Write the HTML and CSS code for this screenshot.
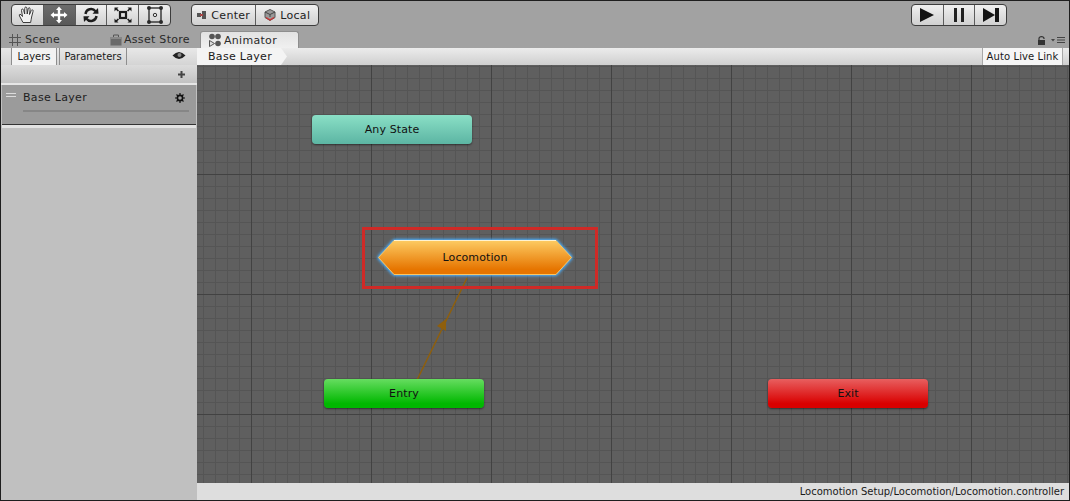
FILE: index.html
```html
<!DOCTYPE html>
<html lang="en">
<head>
  <meta charset="UTF-8" />
  <title>Animator</title>
  <link rel="stylesheet" href="styles.css">
</head>
<body>
  <div class="window">
    <div class="toolbar">
      <div class="btn-group tools">
        <div class="tool-btn">
          <svg width="20" height="18" viewBox="0 0 20 18"><path d="M6 16.5 L2.5 10 Q1.8 8.5 3 8.3 Q4 8.2 5.5 10.5 L4.5 4.5 Q4.4 3 5.4 3 Q6.3 3 6.7 4.5 L7.7 8 L7.7 2.5 Q7.8 1 8.8 1 Q9.8 1 9.9 2.5 L10.2 8 L11.2 2.8 Q11.5 1.6 12.4 1.8 Q13.3 2 13.1 3.4 L12.5 8.5 L14.2 4.5 Q14.8 3.5 15.6 3.9 Q16.4 4.4 16 5.6 L14.6 11 Q14.2 13.5 13.6 16.5 Z" fill="#f2f2f2" stroke="#2a2a2a" stroke-width="0.9"/></svg>
        </div>
        <div class="tool-btn active">
          <svg width="18" height="18" viewBox="0 0 18 18"><path d="M9 0.5 L12 4 L10.2 4 L10.2 7.8 L14 7.8 L14 6 L17.5 9 L14 12 L14 10.2 L10.2 10.2 L10.2 14 L12 14 L9 17.5 L6 14 L7.8 14 L7.8 10.2 L4 10.2 L4 12 L0.5 9 L4 6 L4 7.8 L7.8 7.8 L7.8 4 L6 4 Z" fill="#fff"/></svg>
        </div>
        <div class="tool-btn">
          <svg width="16" height="16" viewBox="0 0 16 16"><path d="M2.5 7 A5.6 5.6 0 0 1 12.5 4.2" fill="none" stroke="#1c1c1c" stroke-width="2.4"/><path d="M9.5 6.8 L15.5 6.8 L15 1 Z" fill="#1c1c1c"/><path d="M13.5 9 A5.6 5.6 0 0 1 3.5 11.8" fill="none" stroke="#1c1c1c" stroke-width="2.4"/><path d="M6.5 9.2 L0.5 9.2 L1 15 Z" fill="#1c1c1c"/></svg>
        </div>
        <div class="tool-btn">
          <svg width="18" height="16" viewBox="0 0 18 16"><rect x="6" y="5" width="6" height="6" fill="none" stroke="#1c1c1c" stroke-width="2.2"/><path d="M0.5 0.5 H4.5 L3.2 1.8 L5 3.6 L3.8 4.6 L2 2.8 L0.5 4.5 Z M17.5 0.5 H13.5 L14.8 1.8 L13 3.6 L14.2 4.6 L16 2.8 L17.5 4.5 Z M0.5 15.5 H4.5 L3.2 14.2 L5 12.4 L3.8 11.4 L2 13.2 L0.5 11.5 Z M17.5 15.5 H13.5 L14.8 14.2 L13 12.4 L14.2 11.4 L16 13.2 L17.5 11.5 Z" fill="#1c1c1c"/></svg>
        </div>
        <div class="tool-btn">
          <svg width="18" height="18" viewBox="0 0 18 18"><rect x="3" y="2" width="12" height="14" fill="none" stroke="#222" stroke-width="1.3"/><circle cx="3" cy="2" r="2" fill="#2a2a2a"/><circle cx="15" cy="2" r="2" fill="#2a2a2a"/><circle cx="3" cy="16" r="2" fill="#2a2a2a"/><circle cx="15" cy="16" r="2" fill="#2a2a2a"/><circle cx="9" cy="9" r="1.7" fill="none" stroke="#333"/></svg>
        </div>
      </div>
      <div class="btn-group pivot">
        <div class="text-btn">
          <svg width="10" height="8" viewBox="0 0 10 8"><rect x="0" y="2" width="4" height="4" fill="#555"/><rect x="5" y="0" width="4" height="8" fill="#555"/><rect x="3" y="3" width="3" height="2" fill="#a44"/></svg>
          Center
        </div>
        <div class="text-btn">
          <svg width="12" height="12" viewBox="0 0 12 12"><path d="M6 .5 L11 3 V8.5 L6 11.5 L1 8.5 V3 Z" fill="#999" stroke="#555"/><path d="M1 3 L6 5.5 L11 3 M6 5.5 V8" fill="none" stroke="#444"/><path d="M2 8.5 L6 11 L10 8.5" fill="none" stroke="#c33" stroke-width="1.4"/></svg>
          Local
        </div>
      </div>
      <div class="btn-group play">
        <div class="tool-btn">
          <svg width="16" height="14" viewBox="0 0 16 14"><path d="M1 0 L15 7 L1 14 Z" fill="#141414"/></svg>
        </div>
        <div class="tool-btn">
          <svg width="10" height="14" viewBox="0 0 10 14"><rect x="0" y="0" width="3" height="14" fill="#222"/><rect x="7" y="0" width="3" height="14" fill="#222"/></svg>
        </div>
        <div class="tool-btn">
          <svg width="18" height="14" viewBox="0 0 18 14"><path d="M1 0 L13 7 L1 14 Z" fill="#141414"/><rect x="13" y="0" width="4" height="14" fill="#141414"/></svg>
        </div>
      </div>
    </div>

    <div class="tabbar">
      <div class="tab tab-scene">
        <svg width="12" height="12" viewBox="0 0 12 12"><path d="M3.5 0 V12 M8.5 0 V12 M0 3.5 H12 M0 8.5 H12" stroke="#555" stroke-width="1"/></svg>
        Scene
      </div>
      <div class="tab tab-store">
        <svg width="12" height="12" viewBox="0 0 12 12"><rect x="0.5" y="3" width="11" height="8.5" fill="#6a6a6a"/><rect x="0.5" y="3" width="11" height="2" fill="#888"/><path d="M3.5 3 V1 H8.5 V3" fill="none" stroke="#555"/></svg>
        Asset Store
      </div>
      <div class="tab tab-active">
        <svg width="12" height="14" viewBox="0 0 12 14"><circle cx="3" cy="3.5" r="2.8" fill="#555"/><circle cx="9" cy="3.5" r="2.8" fill="#555"/><circle cx="9" cy="10.5" r="2.8" fill="#555"/><path d="M0.5 7.5 L5.5 10.5 L0.5 13.5 Z" fill="#ddd" stroke="#555"/></svg>
        Animator
      </div>
      <div class="tab-tools">
        <svg width="9" height="9" viewBox="0 0 9 9"><path d="M2 4 V2.5 Q2 .7 4.5 .7 Q7 .7 7 2.5 V3" fill="none" stroke="#333" stroke-width="1.2"/><rect x="1" y="4" width="7" height="5" fill="#333"/></svg>
        <svg class="tab-menu" width="14" height="6" viewBox="0 0 14 6"><path d="M0 2 H4 L2 4.5 Z" fill="#444"/><path d="M6 .5 H14 M6 3 H14 M6 5.5 H14" stroke="#444"/></svg>
      </div>
    </div>

    <div class="main">
      <div class="side">
        <div class="side-tabs">
          <div class="side-tab current">Layers</div>
          <div class="side-tab">Parameters</div>
          <svg class="eye" width="14" height="9" viewBox="0 0 14 9"><path d="M.5 4.5 Q7 -2.5 13.5 4.5 Q7 11.5 .5 4.5 Z" fill="#222"/><circle cx="7.5" cy="4" r="2" fill="#888"/></svg>
        </div>
        <div class="side-add">
          <svg width="7" height="7" viewBox="0 0 7 7"><path d="M2.5 0 H4.5 V2.5 H7 V4.5 H4.5 V7 H2.5 V4.5 H0 V2.5 H2.5 Z" fill="#444"/></svg>
        </div>
        <div class="layer">
          <div class="layer-grip"></div>
          <div class="layer-body">
            <div class="layer-head">
              <span>Base Layer</span>
              <svg width="10" height="10" viewBox="0 0 10 10"><circle cx="5" cy="5" r="2.6" fill="none" stroke="#111" stroke-width="1.6"/><path d="M5 0 V2.5 M5 7.5 V10 M0 5 H2.5 M7.5 5 H10 M1.5 1.5 L3 3 M7 7 L8.5 8.5 M8.5 1.5 L7 3 M3 7 L1.5 8.5" stroke="#111" stroke-width="1.2"/></svg>
            </div>
            <div class="layer-bar"></div>
          </div>
        </div>
      </div>

      <div class="editor">
        <div class="crumbs">
          <div class="crumb">Base Layer</div>
          <div class="live-link">Auto Live Link</div>
        </div>
        <div class="graph">
          <svg class="wires" width="872" height="418" viewBox="0 0 872 418">
            <path d="M220 315 L270 213" stroke="#8f5f0c" stroke-width="1.5"/>
            <path d="M249 254 L240 261 L249 266 Z" fill="#8f5f0c"/>
          </svg>
          <div class="node any-state">Any State</div>
          <div class="node entry">Entry</div>
          <div class="node exit">Exit</div>
          <div class="hex-node">
            <svg width="200" height="39" viewBox="0 0 200 39">
              <defs>
                <linearGradient id="hexFill" x1="0" y1="0" x2="0" y2="1">
                  <stop offset="0" stop-color="#fdcb62"/>
                  <stop offset="0.85" stop-color="#e67500"/>
                </linearGradient>
              </defs>
              <polygon class="hex-shape" points="19,2.5 181,2.5 196.5,19.5 181,36.5 19,36.5 3.5,19.5" fill="url(#hexFill)"/>
              <path d="M19 2.5 H181" stroke="#fff3d0" stroke-width="1"/>
            </svg>
            <span class="hex-label">Locomotion</span>
          </div>
          <div class="highlight"></div>
        </div>
        <div class="status">Locomotion Setup/Locomotion/Locomotion.controller</div>
      </div>
    </div>
  </div>
</body>
</html>
```

FILE: styles.css
```css
html, body {
  margin: 0;
  padding: 0;
}
body {
  width: 1070px;
  height: 501px;
  overflow: hidden;
  font-family: "DejaVu Sans", sans-serif;
  font-size: 11px;
  letter-spacing: 0.3px;
  color: #1a1a1a;
}
.window {
  box-sizing: border-box;
  width: 1070px;
  height: 501px;
  border: 1px solid #1e1e1e;
  background: #a2a2a2;
  display: flex;
  flex-direction: column;
}

/* top toolbar */
.toolbar {
  height: 29px;
  flex: none;
  display: flex;
  align-items: flex-start;
  padding: 3px 0 0 10px;
  box-sizing: border-box;
}
.btn-group {
  display: flex;
  height: 22px;
  box-sizing: border-box;
  border: 1px solid #3c3c3c;
  border-radius: 4px;
  overflow: hidden;
  background: linear-gradient(#f0f0f0, #d0d0d0);
}
.tools { width: 160px; }
.pivot { width: 128px; margin-left: 20px; }
.play { width: 96px; margin-left: 592px; }
.tool-btn {
  flex: 1;
  display: flex;
  align-items: center;
  justify-content: center;
  border-left: 1px solid #5c5c5c;
}
.tool-btn:first-child { border-left: none; }
.tool-btn.active {
  background: linear-gradient(#6c6c6c, #585858);
}
.text-btn {
  flex: 1;
  display: flex;
  align-items: center;
  justify-content: center;
  gap: 4px;
  padding-left: 1px;
  border-left: 1px solid #5c5c5c;
  color: #222;
}
.text-btn:first-child { border-left: none; }

/* tab row */
.tabbar {
  height: 18px;
  flex: none;
  display: flex;
  align-items: flex-end;
}
.tab {
  height: 17px;
  display: flex;
  align-items: center;
  gap: 4px;
  box-sizing: border-box;
  color: #2a2a2a;
}
.tab-scene { margin-left: 8px; width: 101px; }
.tab-store { width: 90px; gap: 2px; }
.tab-active {
  width: 99px;
  padding-left: 8px;
  gap: 3px;
  border: 1px solid #8e8e8e;
  border-bottom: none;
  border-radius: 3px 3px 0 0;
  background: linear-gradient(#e2e2e2, #f0f0f0);
}
.tab-tools {
  margin-left: auto;
  margin-right: 4px;
  display: flex;
  align-items: center;
  gap: 5px;
  height: 16px;
}

/* body */
.main {
  flex: 1;
  display: flex;
  min-height: 0;
}
.side {
  width: 196px;
  flex: none;
  background: #c0c0c0;
  display: flex;
  flex-direction: column;
}
.side-tabs {
  height: 17px;
  flex: none;
  display: flex;
  align-items: stretch;
  padding-left: 10px;
  background: linear-gradient(#e8e8e8, #d4d4d4);
  position: relative;
  box-sizing: border-box;
}
.side-tab {
  display: flex;
  align-items: center;
  justify-content: center;
  box-sizing: border-box;
  font-size: 10px;
  letter-spacing: 0;
  border-right: 1px solid #8e8e8e;
  width: 68px;
  margin-left: 2px;
  border-left: 1px solid #8e8e8e;
}
.side-tab.current {
  width: 46px;
  margin-left: 0;
  background: #f2f2f2;
}
.eye {
  position: absolute;
  right: 11px;
  top: 3px;
}
.side-add {
  height: 20px;
  flex: none;
  display: flex;
  align-items: center;
  justify-content: flex-end;
  padding-right: 12px;
  box-sizing: border-box;
  background: linear-gradient(#dcdcdc, #c2c2c2);
  border-bottom: 2px solid #e6e6e6;
}
.layer {
  height: 39px;
  flex: none;
  display: flex;
  margin: 0 1px 3px 1px;
  background: #9b9b9b;
  border-bottom: 1px solid #333;
  box-shadow: 0 3px 0 #e2e2e2;
}
.layer-grip {
  width: 10px;
  height: 2px;
  margin: 8px 0 0 4px;
  border-top: 1px solid #dcdcdc;
  border-bottom: 1px solid #dcdcdc;
  flex: none;
}
.layer-body {
  flex: 1;
  margin: 0 7px 0 7px;
  display: flex;
  flex-direction: column;
}
.layer-head {
  height: 25px;
  display: flex;
  align-items: center;
  justify-content: space-between;
  padding-right: 4px;
  color: #1e1e1e;
}
.layer-bar {
  height: 2px;
  background: #868686;
}

/* editor side */
.editor {
  flex: 1;
  display: flex;
  flex-direction: column;
  min-width: 0;
}
.crumbs {
  height: 17px;
  flex: none;
  display: flex;
  justify-content: space-between;
  background: linear-gradient(#ececec, #cfcfcf);
  padding-right: 6px;
  box-sizing: border-box;
}
.crumb {
  width: 90px;
  padding-left: 11px;
  box-sizing: border-box;
  display: flex;
  align-items: center;
  background: #f4f4f4;
  clip-path: polygon(0 0, 84px 0, 90px 50%, 84px 100%, 0 100%);
}
.live-link {
  width: 81px;
  display: flex;
  align-items: center;
  justify-content: center;
  font-size: 10px;
  letter-spacing: 0.1px;
  background: #f6f6f6;
  border-left: 1px solid #a8a8a8;
  border-right: 1px solid #a8a8a8;
  box-sizing: border-box;
}
.graph {
  flex: 1;
  position: relative;
  overflow: hidden;
  background-color: #5f5f5f;
  background-image:
    repeating-linear-gradient(90deg, transparent 0 54px, #424242 54px 55px, transparent 55px 120px),
    repeating-linear-gradient(180deg, transparent 0 109px, #424242 109px 110px, transparent 110px 120px),
    repeating-linear-gradient(90deg, #555 0 1px, transparent 1px 12px),
    repeating-linear-gradient(180deg, #555 0 1px, transparent 1px 12px);
  background-position: 0 0, 0 0, 6px 0, 0 1px;
}
.wires {
  position: absolute;
  left: 0;
  top: 0;
}
.node {
  position: absolute;
  width: 160px;
  height: 29px;
  border-radius: 4px;
  display: flex;
  align-items: center;
  justify-content: center;
  box-shadow: 0 1px 2px rgba(0,0,0,.5);
  color: #111;
  letter-spacing: 0.1px;
}
.any-state {
  left: 115px;
  top: 50px;
  background: linear-gradient(#8adfc6, #5cb5a3);
}
.entry {
  left: 127px;
  top: 314px;
  background: linear-gradient(#66dd60, #00b800 85%);
}
.exit {
  left: 571px;
  top: 314px;
  background: linear-gradient(#e85f5f, #d90000 85%);
}
.hex-node {
  position: absolute;
  left: 178px;
  top: 173px;
  width: 200px;
  height: 39px;
  display: flex;
  align-items: center;
  justify-content: center;
  letter-spacing: 0.1px;
}
.hex-node svg {
  position: absolute;
  left: 0;
  top: 0;
  overflow: visible;
}
.hex-shape {
  stroke: #fbc564;
  stroke-width: 1;
  stroke-linejoin: round;
  filter: drop-shadow(0 0 1.5px #4ab0ff) drop-shadow(0 0 1.5px #4ab0ff);
}
.hex-label {
  position: relative;
  color: #111;
}
.highlight {
  position: absolute;
  left: 165px;
  top: 162px;
  width: 236px;
  height: 62px;
  box-sizing: border-box;
  border: 3px solid #cf2a27;
}
.status {
  height: 17px;
  flex: none;
  display: flex;
  align-items: center;
  justify-content: flex-end;
  padding-right: 5px;
  background: #dedede;
  font-size: 10px;
  letter-spacing: 0;
}
```
